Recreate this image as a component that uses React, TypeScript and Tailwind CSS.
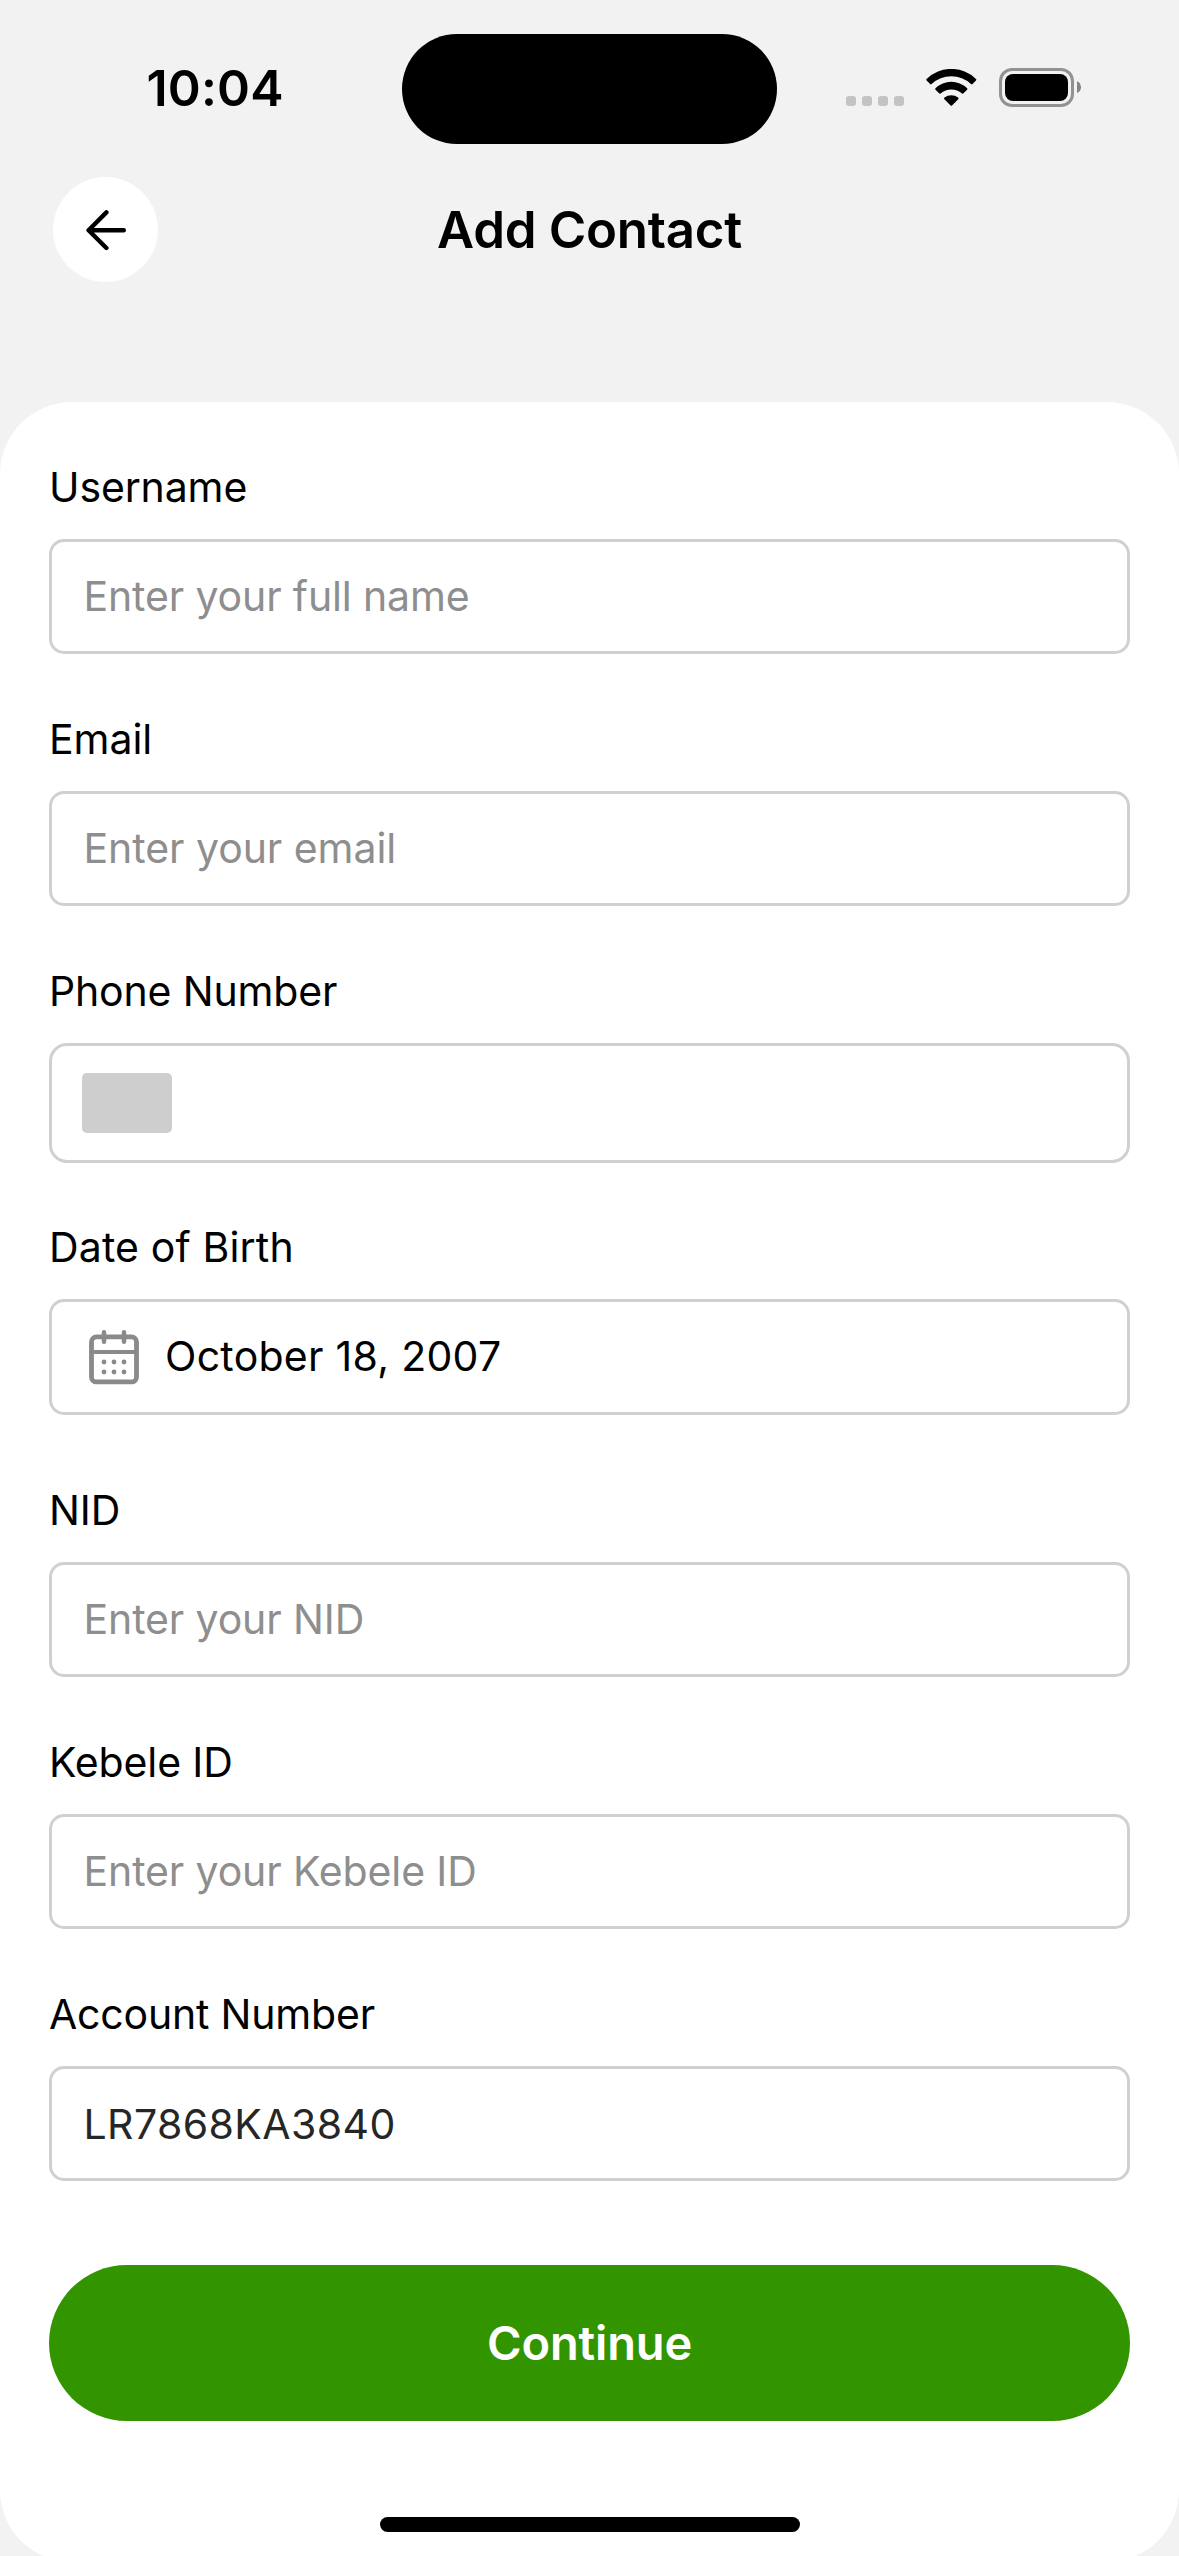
import type { ReactNode } from 'react';

function StatusBar() {
  return (
    <div className="flex h-[177px] items-start">
      <div className="ml-[146.5px] mt-[58px] w-[255.5px] text-[50px] leading-[60px] font-semibold tracking-[0.15px]">10:04</div>
      <div className="mt-[33.5px] h-[110.5px] w-[375px] rounded-full bg-black" />
      <div className="mt-24 ml-[69px] flex gap-1.5">
        {[0, 1, 2, 3].map((n) => (
          <div key={n} className="size-2.5 rounded-[3px] bg-[#c3c3c3]" />
        ))}
      </div>
      <svg className="mt-[69px] ml-[22px] h-[37px] w-[51px]" viewBox="0 0 51 37">
        <path d="M0.6 11.4Q-0.2 10.7 0.6 9.9A35.5 35.5 0 0 1 50 9.9Q50.8 10.7 50 11.4L46.5 15Q45.8 15.8 45 15A29 29 0 0 0 5.6 15Q4.8 15.8 4.1 15Z" />
        <path d="M9.5 20.8Q8.7 20 9.5 19.2A22.8 22.8 0 0 1 41.1 19.2Q41.9 20 41.1 20.8L37.5 24.3Q36.7 25.1 36 24.4A16.4 16.4 0 0 0 14.6 24.4Q13.9 25.1 13.1 24.3Z" />
        <path d="M18.4 30.3Q17.6 29.4 18.5 28.6A10.6 10.6 0 0 1 32.1 28.6Q33 29.4 32.2 30.3L26 36.5Q25.3 37.2 24.6 36.5Z" />
      </svg>
      <svg className="mt-[68px] ml-[22px] h-[39px] w-[83px]" viewBox="0 0 83 39">
        <rect x="1.5" y="1.5" width="72" height="36" rx="11.5" fill="none" stroke="#929292" strokeWidth="3" />
        <rect x="6" y="6" width="63" height="27" rx="8" />
        <path d="M78 13.3C83.3 15.6 83.3 22.8 78 25Z" fill="#858585" />
      </svg>
    </div>
  );
}

function TopBar() {
  return (
    <div className="grid h-[225px] grid-cols-[105px_1fr_105px] items-start px-[53px]">
      <button className="flex size-[105px] items-center justify-center rounded-full bg-white">
        <svg className="size-[42px]" viewBox="0 0 42 42" fill="none" stroke="black" strokeWidth="4.4" strokeLinecap="round" strokeLinejoin="round">
          <path d="M38.8 21.2H3.6M21.4 3.4L3.6 21.2L21.4 39" />
        </svg>
      </button>
      <h1 className="mt-[22px] text-center text-[51px] leading-[61px] font-semibold tracking-[-0.28px]">Add Contact</h1>
    </div>
  );
}

function Field({ label, className, labelClass = '', boxClass, children }: {
  label: string;
  className: string;
  labelClass?: string;
  boxClass: string;
  children: ReactNode;
}) {
  return (
    <div className={className}>
      <div className={`leading-[50px] ${labelClass}`}>{label}</div>
      <div className={`mt-[27px] flex items-start border-[3px] border-[#d0d0d0] ${boxClass}`}>{children}</div>
    </div>
  );
}

const textBox = 'h-[115px] rounded-[15px] pt-[29px] pl-[31.5px] leading-[50px] text-[#8e8e8e]';

function CalendarIcon() {
  return (
    <svg className="-mt-[1px] size-[60px] shrink-0" viewBox="0 0 60 60" fill="none" stroke="#8a8a8a" strokeWidth="4.8" strokeLinecap="round">
      <rect x="7.5" y="9.9" width="45" height="45" rx="5" />
      <path d="M7.5 25H52.5" strokeWidth="4.2" />
      <path d="M20 5.2V14.8M40 5.2V14.8" strokeWidth="4.5" />
      <g fill="#8a8a8a" stroke="none">
        {[35, 45].map((y) => [20, 30, 40].map((x) => <circle key={`${x}-${y}`} cx={x} cy={y} r="2.4" />))}
      </g>
    </svg>
  );
}

export default function App() {
  return (
    <div className="h-[2556px] w-[1179px] overflow-hidden bg-[#f2f2f2] font-[Inter,sans-serif] text-black">
      <StatusBar />
      <TopBar />
      <main className="flex h-[2160px] flex-col rounded-[72px] bg-white px-[49px] pt-[60px] text-[41px]">
        <Field label="Username" className="tracking-[-0.13px]" boxClass={textBox}>Enter your full name</Field>
        <Field label="Email" className="mt-[60px] tracking-[-0.05px]" boxClass={textBox}>Enter your email</Field>
        <Field label="Phone Number" className="mt-[60px] tracking-[-0.16px]" boxClass="h-[120px] rounded-[18px] pt-[27px] pl-[30px]">
          <div className="h-[60px] w-[90px] rounded-[5px] bg-[#cecece]" />
        </Field>
        <Field label="Date of Birth" className="mt-[59px]" labelClass="tracking-[0.15px]" boxClass="h-[116px] rounded-[15px] pt-[26px] pl-[32px]">
          <CalendarIcon />
          <span className="mt-[3px] ml-[21px] leading-[50px] tracking-[0.28px]">October 18, 2007</span>
        </Field>
        <Field label="NID" className="mt-[70px] tracking-[-0.12px]" boxClass={textBox}>Enter your NID</Field>
        <Field label="Kebele ID" className="mt-[60px] tracking-[-0.12px]" boxClass={textBox}>Enter your Kebele ID</Field>
        <Field label="Account Number" className="mt-[60px]" labelClass="tracking-[-0.19px]" boxClass="h-[115px] rounded-[15px] pt-[30px] pl-[31.5px] leading-[50px] tracking-[0.42px] text-[#262626]">LR7868KA3840</Field>
        <button className="mt-[84px] flex h-[156px] shrink-0 items-start justify-center rounded-full bg-[#329500] pt-[49px] text-[47px] leading-[57px] font-semibold tracking-[-0.13px] text-white">Continue</button>
        <div className="mt-24 h-[15px] w-[420px] shrink-0 self-center rounded-full bg-black" />
      </main>
    </div>
  );
}
